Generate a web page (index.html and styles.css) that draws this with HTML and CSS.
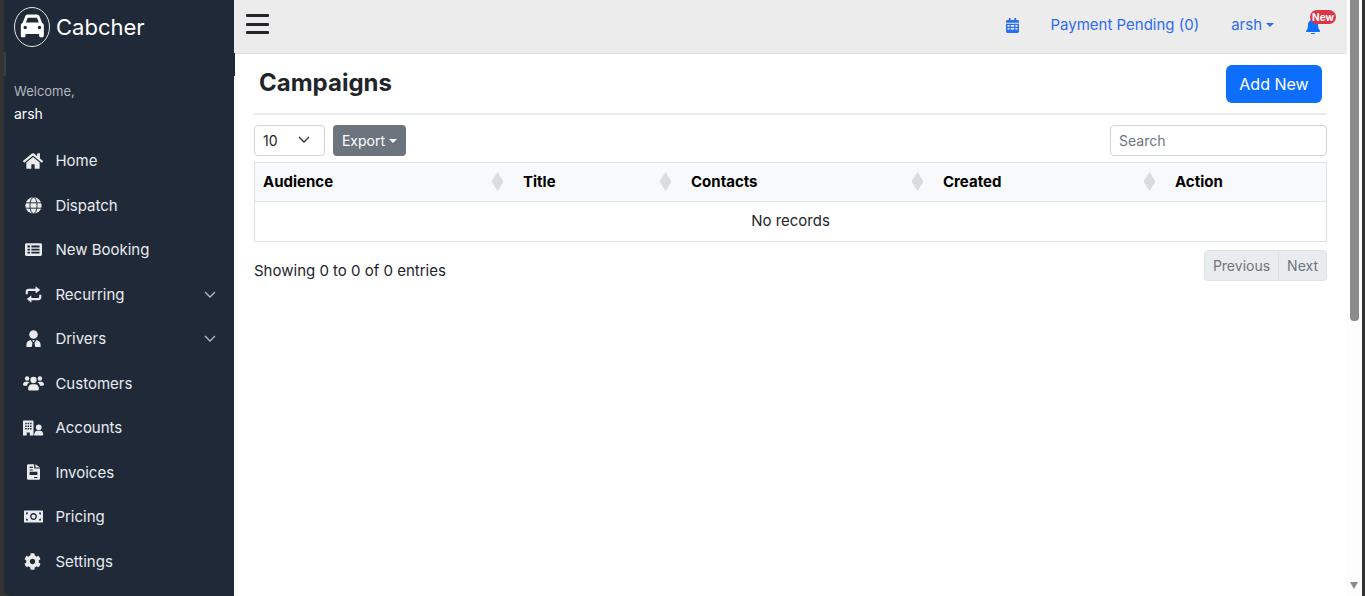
FILE: index.html
```html
<!DOCTYPE html>
<html lang="en">
<head>
<meta charset="utf-8">
<title>Campaigns</title>
<link rel="stylesheet" href="styles.css">
</head>
<body>
<div class="frame">
  <aside class="sidebar">
    <div class="brand">
      <svg class="brand-logo" viewBox="0 0 36 40"><ellipse cx="18" cy="20" rx="17.500" ry="19.500" fill="none" stroke="#e4e6e8" stroke-width="1"/><path transform="translate(18.350 19) scale(1.150) translate(-19 -17.700)" fill="#fff" d="M12.600 9.600C13 8.500 14 7.800 15.200 7.800h7.600c1.200 0 2.200.7 2.600 1.800l2 5.200c1 .5 1.600 1.500 1.600 2.600v8.800c0 .7-.5 1.300-1.200 1.300h-1.700c-.7 0-1.200-.6-1.200-1.300v-1.500H13.100v1.500c0 .7-.5 1.300-1.200 1.300h-1.700c-.7 0-1.200-.6-1.200-1.300v-8.800c0-1.100.6-2.100 1.600-2.600zM14.900 10.800l-1.500 3.800h11.200l-1.500-3.800c-.1-.2-.3-.3-.5-.3h-7.200c-.2 0-.4.100-.5.300zM12.800 20.500a1.500 1.500 0 1 0 0-3 1.500 1.500 0 0 0 0 3zM25.200 20.500a1.500 1.500 0 1 0 0-3 1.500 1.500 0 0 0 0 3z" fill-rule="evenodd"/></svg>
      <span class="brand-name">Cabcher</span>
    </div>
    <div class="welcome">
      <div class="welcome-label">Welcome,</div>
      <div class="welcome-user">arsh</div>
    </div>
    <nav class="menu">
      <a class="menu-item"><span class="menu-icon"><svg class="i-home" viewBox="0 0 576 512"><path d="M280.370 148.260L96 300.110V464a16 16 0 0 0 16 16l112.060-.29a16 16 0 0 0 15.920-16V368a16 16 0 0 1 16-16h64a16 16 0 0 1 16 16v95.640a16 16 0 0 0 16 16.050L464 480a16 16 0 0 0 16-16V300L295.670 148.260a12.190 12.190 0 0 0-15.300 0zM571.600 251.470L488 182.560V44.050a12 12 0 0 0-12-12h-56a12 12 0 0 0-12 12v72.610L318.470 43a48 48 0 0 0-61 0L4.340 251.470a12 12 0 0 0-1.600 16.900l25.500 31A12 12 0 0 0 45.150 301l235.220-193.740a12.190 12.190 0 0 1 15.300 0L530.900 301a12 12 0 0 0 16.900-1.600l25.500-31a12 12 0 0 0-1.700-16.930z"/></svg></span><span class="menu-label">Home</span></a>
      <a class="menu-item"><span class="menu-icon"><svg class="i-std" viewBox="0 0 24 24"><circle cx="12" cy="12" r="11.500"/><g fill="none" stroke="#1f2937" stroke-width="1.300"><path d="M.5 8.200h23M.5 15.800h23"/><ellipse cx="12" cy="12" rx="5" ry="11.500"/></g></svg></span><span class="menu-label">Dispatch</span></a>
      <a class="menu-item"><span class="menu-icon"><svg class="i-std" viewBox="0 0 24 20"><path fill-rule="evenodd" d="M2 1h20a2 2 0 0 1 2 2v14a2 2 0 0 1-2 2H2a2 2 0 0 1-2-2V3a2 2 0 0 1 2-2zM3.500 4.500v2.500H7V4.500zM9 4.500v2.500h11.500V4.500zM3.500 8.800v2.500H7V8.800zM9 8.800v2.500h11.500V8.800zM3.500 13v2.500H7V13zM9 13v2.500h11.500V13z"/></svg></span><span class="menu-label">New Booking</span></a>
      <a class="menu-item"><span class="menu-icon"><svg class="i-std" viewBox="0 0 24 24"><path d="M1 11.500V8a4 4 0 0 1 4-4h10V.5L21.500 5.500 15 10.500V7H5.500C4.700 7 4 7.700 4 8.500v3zM23 12.500V16a4 4 0 0 1-4 4H9v3.500L2.500 18.500 9 13.500V17h9.500c.8 0 1.500-.7 1.500-1.500v-3z"/></svg></span><span class="menu-label">Recurring</span><svg class="chev" viewBox="0 0 12 7"><path d="M1 1l5 5 5-5"/></svg></a>
      <a class="menu-item"><span class="menu-icon"><svg class="i-std" viewBox="0 0 24 24"><circle cx="12" cy="6.500" r="6"/><path fill-rule="evenodd" d="M2 24v-3.500C2 17 4.800 14.500 8 14.200l2.600 4.300-1.100 5.500zM22 24v-3.500c0-3.500-2.800-6-6-6.300l-2.600 4.300 1.100 5.500zM10.500 14h3l-.9 3h-1.200z"/></svg></span><span class="menu-label">Drivers</span><svg class="chev" viewBox="0 0 12 7"><path d="M1 1l5 5 5-5"/></svg></a>
      <a class="menu-item"><span class="menu-icon menu-icon-wide"><svg class="i-wide" viewBox="0 0 28 20"><circle cx="5.500" cy="4" r="3"/><circle cx="22.500" cy="4" r="3"/><circle cx="14" cy="6" r="4.200"/><path d="M0 12c0-2 1.500-3.700 3.500-3.700h3c.8 0 1.500.3 2.100.7C6.800 10.100 5.600 11.800 5.400 13.500H1.500C.7 13.500 0 12.800 0 12zM28 12c0-2-1.500-3.700-3.500-3.700h-3c-.8 0-1.500.3-2.100.7 1.800 1.100 3 2.800 3.200 4.500h3.900c.8 0 1.500-.7 1.500-1.500zM6.800 17c0-3.100 2.400-5.500 5.200-5.500h4c2.800 0 5.200 2.400 5.200 5.500v1c0 1.100-.9 2-2 2H8.800c-1.100 0-2-.9-2-2z"/></svg></span><span class="menu-label">Customers</span></a>
      <a class="menu-item"><span class="menu-icon menu-icon-wide"><svg class="i-wide" viewBox="0 0 28 20"><path fill-rule="evenodd" d="M1 0h12c.6 0 1 .4 1 1v19H9v-4H5v4H0V1c0-.6.4-1 1-1zM3 3v2h2V3zM6.200 3v2h2V3zM9.400 3v2h2V3zM3 6.500v2h2v-2zM6.200 6.500v2h2v-2zM9.400 6.500v2h2v-2zM3 10v2h2v-2zM6.200 10v2h2v-2zM9.400 10v2h2v-2z"/><circle cx="21" cy="9" r="3.800"/><path d="M15.200 18c0-2.900 2-4.500 4-4.500h3.600c2 0 4 1.600 4.200 4.500 0 1.100-.6 2-1.500 2h-9c-1.300 0-1.900-.9-2.300-2z"/></svg></span><span class="menu-label">Accounts</span></a>
      <a class="menu-item"><span class="menu-icon"><svg class="i-doc" viewBox="0 0 20 24"><path fill-rule="evenodd" d="M2 0h9v6.500h9V22a2 2 0 0 1-2 2H2a2 2 0 0 1-2-2V2a2 2 0 0 1 2-2zM13 0l7 5h-7zM4 4v1.700h5V4zM4 8v1.700h5V8zM4 11.500v5h12v-5zM11 19.500v1.800h5v-1.800z"/></svg></span><span class="menu-label">Invoices</span></a>
      <a class="menu-item"><span class="menu-icon"><svg class="i-bill" viewBox="0 0 28 18"><path fill-rule="evenodd" d="M1 0h26c.6 0 1 .4 1 1v16c0 .6-.4 1-1 1H1c-.6 0-1-.4-1-1V1c0-.6.4-1 1-1zM3 3v3c1.700 0 3-1.300 3-3zM22 3c0 1.700 1.300 3 3 3V3zM3 12v3h3c0-1.700-1.300-3-3-3zM25 12c-1.700 0-3 1.300-3 3h3zM14 4c-2.800 0-5 2.200-5 5s2.200 5 5 5 5-2.200 5-5-2.200-5-5-5zM14 6c1.700 0 3 1.300 3 3s-1.300 3-3 3-3-1.300-3-3 1.300-3 3-3z"/></svg></span><span class="menu-label">Pricing</span></a>
      <a class="menu-item"><span class="menu-icon"><svg class="i-cog" viewBox="0 0 512 512"><path d="M487.400 315.700l-42.600-24.600c4.300-23.200 4.300-47 0-70.200l42.600-24.600c4.900-2.800 7.100-8.600 5.500-14-11.100-35.600-30-67.800-54.700-94.600-3.800-4.100-10-5.100-14.800-2.300L380.800 110c-17.900-15.400-38.500-27.300-60.800-35.100V25.800c0-5.600-3.900-10.500-9.400-11.700-36.700-8.200-74.300-7.800-109.200 0-5.500 1.200-9.400 6.100-9.400 11.700V75c-22.200 7.900-42.800 19.800-60.800 35.100L88.700 85.500c-4.900-2.800-11-1.900-14.800 2.300-24.700 26.700-43.600 58.900-54.700 94.600-1.700 5.400.6 11.200 5.500 14L67.300 221c-4.300 23.200-4.300 47 0 70.200l-42.600 24.600c-4.900 2.800-7.100 8.600-5.500 14 11.100 35.600 30 67.800 54.700 94.600 3.800 4.100 10 5.100 14.800 2.300l42.600-24.600c17.900 15.400 38.500 27.300 60.800 35.100v49.200c0 5.600 3.900 10.500 9.400 11.700 36.700 8.200 74.300 7.800 109.200 0 5.500-1.200 9.400-6.100 9.400-11.700v-49.200c22.200-7.900 42.800-19.800 60.800-35.100l42.600 24.600c4.900 2.800 11 1.900 14.800-2.300 24.700-26.700 43.600-58.900 54.700-94.600 1.500-5.500-.7-11.300-5.600-14.100zM256 336c-44.100 0-80-35.900-80-80s35.900-80 80-80 80 35.900 80 80-35.900 80-80 80z"/></svg></span><span class="menu-label">Settings</span></a>
    </nav>
  </aside>

  <div class="main">
    <header class="topbar">
      <button class="burger" type="button" aria-label="Toggle menu"><span></span><span></span><span></span></button>
      <div class="top-links">
        <svg class="cal" viewBox="0 0 14 16"><path fill-rule="evenodd" d="M3 0h2v2h4V0h2v2h1.500c.8 0 1.500.7 1.500 1.500V5H0V3.500C0 2.700.7 2 1.500 2H3zM0 6h14v8.500c0 .8-.7 1.500-1.500 1.500h-11C.7 16 0 15.300 0 14.500zM1.500 7.500v1.800h2.300V7.500zM5.100 7.500v1.800h3.800V7.500zM10.200 7.500v1.800h2.300V7.500zM1.500 10.600v1.800h2.300v-1.800zM5.100 10.600v1.800h3.800v-1.800zM10.200 10.600v1.800h2.300v-1.800z"/></svg>
        <a class="top-link link-pay">Payment Pending (0)</a>
        <a class="top-link link-user">arsh<span class="caret caret-blue"></span></a>
        <span class="bell-wrap">
          <svg class="bell" viewBox="0 0 14 16"><path d="M7 0c.6 0 1 .4 1 1v.7c2.300.5 4 2.500 4 4.900 0 3.500 1 4.900 1.700 5.600.2.200.3.500.3.800 0 .6-.5 1-1 1H1c-.5 0-1-.4-1-1 0-.3.1-.6.3-.8C1 12.500 2 11.100 2 6.600c0-2.400 1.700-4.400 4-4.900V1c0-.6.4-1 1-1zM5 15h4a2 2 0 0 1-4 0z"/></svg>
          <span class="badge">New</span>
        </span>
      </div>
    </header>

    <main class="content">
      <div class="page-head">
        <h1 class="page-title">Campaigns</h1>
        <a class="btn-add">Add New</a>
      </div>
      <div class="toolbar">
        <div class="select-box">10<svg class="select-chev" viewBox="0 0 12 7"><path d="M1 1l5 5 5-5"/></svg></div>
        <button class="btn-export" type="button">Export<span class="caret caret-white"></span></button>
        <div class="search">Search</div>
      </div>
      <table class="grid">
        <colgroup><col class="c1"><col class="c2"><col class="c3"><col class="c4"><col class="c5"></colgroup>
        <thead>
          <tr>
            <th>Audience<span class="sort"></span></th>
            <th>Title<span class="sort"></span></th>
            <th>Contacts<span class="sort"></span></th>
            <th>Created<span class="sort"></span></th>
            <th>Action</th>
          </tr>
        </thead>
        <tbody>
          <tr><td colspan="5">No records</td></tr>
        </tbody>
      </table>
      <div class="foot">
        <div class="info">Showing 0 to 0 of 0 entries</div>
        <div class="pager"><span class="pg pg-prev">Previous</span><span class="pg">Next</span></div>
      </div>
    </main>
  </div>

  <div class="scrollbar">
    <div class="thumb"></div>
    <div class="arrow"></div>
  </div>
</div>
</body>
</html>
```

FILE: styles.css
```css
* { box-sizing: border-box; }
html, body { margin: 0; height: 100%; overflow: hidden; }
body { background: #333; font-family: Inter, "Liberation Sans", sans-serif; font-size: 15px; color: #212529; }
.frame { display: flex; height: 596px; padding: 0 3px 0 4px; }

.sidebar { position: relative; width: 230px; flex: none; background: #1f2937; color: #fff; border-bottom-left-radius: 7px; padding: 7px 0 0 10px; }
.sidebar::before { content: ""; position: absolute; left: 0; top: 52px; width: 2px; height: 24px; background: #3d3d3b; }
.sidebar::after { content: ""; position: absolute; right: -1px; top: 53px; width: 1px; height: 23px; background: #1f2937; }
.brand { display: flex; align-items: center; height: 40px; gap: 6px; }
.brand-logo { width: 36px; height: 40px; flex: none; }
.brand-name { font-size: 22px; line-height: 40px; color: #fff; }
.welcome { margin-top: 34px; }
.welcome-label { font-size: 13px; line-height: 20px; color: #b4b8bd; }
.welcome-user { font-size: 14px; line-height: 20px; margin-top: 3px; color: #fff; }
.menu { margin-top: 14.500px; display: flex; flex-direction: column; }
.menu-item { display: flex; align-items: center; height: 44.500px; color: #e9ebee; }
.menu-icon { width: 38px; padding-left: 9px; flex: none; display: flex; align-items: center; }
.menu-icon-wide { padding-left: 9px; }
.menu-icon svg { fill: #e9ebee; display: block; }
.i-home { width: 20px; height: 18px; }
.i-std { width: 17px; height: 17px; margin-left: 2px; }
.i-wide { width: 21px; height: 16px; }
.i-doc { width: 13px; height: 16px; margin-left: 4px; }
.i-bill { width: 19px; height: 13px; margin-left: 1px; }
.i-cog { width: 17px; height: 17px; margin-left: 1px; }
.menu-label { font-size: 15px; margin-left: 3.400px; flex: 1; }
.chev { width: 12px; height: 7px; margin-right: 18px; fill: none; stroke: #b9bdc3; stroke-width: 1.300; }

.main { flex: 1; min-width: 0; background: #fff; display: flex; flex-direction: column; }
.topbar { height: 54px; flex: none; background: #ececec; border-bottom: 1px solid #dfe1e6; display: flex; align-items: center; justify-content: space-between; padding: 0 11px 4px 12px; }
.burger { display: flex; flex-direction: column; gap: 5.500px; width: 23px; padding: 0; border: 0; background: none; margin-top: -1px; }
.burger span { display: block; height: 3px; border-radius: 1px; background: #212529; }
.top-links { display: flex; align-items: center; }
.cal { width: 13px; height: 15px; fill: #2a6ff0; margin-top: 1px; }
.top-link { color: #2f6bf0; font-size: 15px; display: flex; align-items: center; }
.link-pay { margin-left: 31px; }
.link-user { margin-left: 32px; }
.caret { display: inline-block; width: 0; height: 0; margin-left: 4px; border-style: solid; border-width: 4px 4px 0; border-color: transparent; }
.caret-blue { border-top-color: #2f6bf0; }
.caret-white { border-top-color: #fff; }
.bell-wrap { position: relative; width: 15px; height: 16px; margin-left: 32px; margin-top: 2px; margin-right: 15px; }
.bell { display: block; width: 14px; height: 16px; fill: #0d6efd; }
.badge { position: absolute; left: 4px; top: -8px; width: 26px; height: 14px; border-radius: 7px; background: #dc3545; color: #fff; font-size: 10px; font-weight: 700; line-height: 14px; text-align: center; }

.content { padding: 0 20px; flex: 1; }
.page-head { display: flex; align-items: center; justify-content: space-between; height: 61px; padding: 0 5px; border-bottom: 2px solid #e9ecef; }
.page-title { margin: 0; font-size: 24px; font-weight: 700; line-height: 30px; color: #212529; margin-top: -2px; }
.btn-add { display: block; background: #0d6efd; color: #fff; font-size: 16px; line-height: 38px; height: 38px; width: 96px; text-align: center; border-radius: 6px; margin-top: 1px; }
.toolbar { display: flex; align-items: center; margin-top: 10px; height: 31px; }
.select-box { width: 71px; height: 31px; border: 1px solid #ced4da; border-radius: 4px; font-size: 14px; line-height: 30px; padding-left: 8px; position: relative; color: #212529; }
.select-chev { position: absolute; right: 14px; top: 10px; width: 12px; height: 7px; fill: none; stroke: #343a40; stroke-width: 1.400; }
.btn-export { margin-left: 8px; width: 73px; height: 31px; background: #6c757d; border: 0; border-radius: 4px; color: #fff; font: 14px Inter, "Liberation Sans", sans-serif; padding: 0; display: flex; align-items: center; justify-content: center; }
.search { margin-left: auto; width: 217px; height: 31px; border: 1px solid #ced4da; border-radius: 4px; font-size: 14px; line-height: 30px; padding-left: 8px; color: #6c757d; }
.grid { width: 100%; table-layout: fixed; border-collapse: separate; border-spacing: 0; margin-top: 6px; font-size: 15px; border: 1px solid #dee2e6; }
.c1 { width: 260px; } .c2 { width: 168px; } .c3 { width: 252px; } .c4 { width: 232px; } .c5 { width: 159px; }
.grid th { height: 39px; padding: 0 8px 2px; background: #f8f9fa; color: #000; font-weight: 700; text-align: left; border-bottom: 1px solid #dee2e6; position: relative; }
.grid td { height: 39px; text-align: center; color: #212529; padding: 0 0 2px; }
.sort { position: absolute; right: 12px; top: 9px; width: 11px; height: 19px; background: #dadce0; clip-path: polygon(50% 0, 100% 45%, 100% 55%, 50% 100%, 0 55%, 0 45%); }
.foot { display: flex; justify-content: space-between; margin-top: 8px; }
.info { font-size: 15px; line-height: 20px; margin-top: 11px; }
.pager { display: flex; height: 31px; border: 1px solid #dee2e6; border-radius: 4px; background: #e9ecef; font-size: 14px; line-height: 29px; color: #6c757d; }
.pg { padding: 0 8px; }
.pg-prev { border-right: 1px solid #dee2e6; }

.scrollbar { position: relative; width: 15px; flex: none; background: #fdfdfd; }
.thumb { position: absolute; left: 3px; top: 0; width: 9px; height: 321px; background: #8b8b8b; border-radius: 0 0 4px 4px; }
.arrow { position: absolute; left: 3px; top: 582px; width: 0; height: 0; border-style: solid; border-width: 7px 4.500px 0; border-color: #8b8b8b transparent transparent; }
```
